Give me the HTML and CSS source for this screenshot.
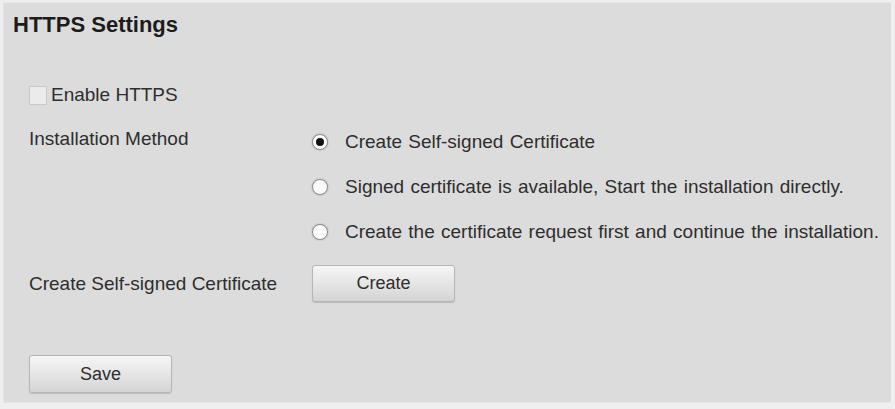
FILE: index.html
```html
<!DOCTYPE html>
<html lang="en">
<head>
  <meta charset="UTF-8" />
  <title>HTTPS Settings</title>
  <link rel="stylesheet" href="styles.css">
</head>
<body>
  <div class="panel">
    <h1 class="title">HTTPS Settings</h1>
    <label class="check-row">
      <span class="checkbox"></span>
      <span>Enable HTTPS</span>
    </label>
    <div class="form-row method-row">
      <div class="label">Installation Method</div>
      <div class="options">
        <div class="option"><span class="radio checked"></span>Create Self-signed Certificate</div>
        <div class="option"><span class="radio"></span>Signed certificate is available, Start the installation directly.</div>
        <div class="option"><span class="radio"></span>Create the certificate request first and continue the installation.</div>
      </div>
    </div>
    <div class="form-row create-row">
      <div class="label">Create Self-signed Certificate</div>
      <button class="btn">Create</button>
    </div>
    <div class="save-row">
      <button class="btn">Save</button>
    </div>
  </div>
</body>
</html>
```

FILE: styles.css
```css
body {
  margin: 0;
  background: #efefef;
  font-family: "Liberation Sans", Arial, sans-serif;
  color: #2e2e2e;
}
.panel {
  margin: 2px 4px 0 3px;
  height: 401px;
  padding: 9px 0 0 0;
  box-sizing: border-box;
  background: #dcdcdc;
  border-top: 1px solid #e6e6e6;
  border-left: 1px solid #e4e4e4;
  border-bottom: 1px solid #e6e6e6;
}
.title {
  margin: 0 0 0 9px;
  font-size: 22px;
  line-height: 26px;
  font-weight: bold;
  color: #1c1c1c;
}
.check-row {
  display: flex;
  align-items: center;
  height: 24px;
  margin: 45px 0 0 25px;
  font-size: 19px;
}
.checkbox {
  width: 16px;
  height: 17px;
  margin-right: 4px;
  border: 1px solid #c8c8c8;
  background: #ebebeb;
}
.form-row {
  display: flex;
  padding-left: 25px;
  font-size: 19px;
}
.label {
  width: 283px;
  flex: none;
}
.method-row {
  margin-top: 12px;
}
.method-row .label {
  padding-top: 8px;
  line-height: 24px;
}
.options {
  display: flex;
  flex-direction: column;
}
.option {
  display: flex;
  align-items: center;
  height: 45px;
  word-spacing: 1px;
}
.radio {
  width: 14px;
  height: 14px;
  margin-right: 17px;
  border: 1px solid #8e8e8e;
  border-radius: 50%;
  background: #fbfbfb;
  box-shadow: 0 0 2px rgba(0, 0, 0, 0.25);
  position: relative;
}
.radio.checked::after {
  content: "";
  position: absolute;
  left: 3px;
  top: 3px;
  width: 8px;
  height: 8px;
  border-radius: 50%;
  background: #111;
}
.create-row {
  margin-top: 11px;
  align-items: center;
}
.btn {
  width: 143px;
  height: 37px;
  padding: 0;
  border: 1px solid #b5b5b5;
  border-radius: 3px;
  background: linear-gradient(to bottom, #f6f6f6, #e2e2e2 60%, #d4d4d4);
  box-shadow: 0 1px 1px rgba(0, 0, 0, 0.15);
  font-family: "Liberation Sans", Arial, sans-serif;
  font-size: 18px;
  color: #2e2e2e;
}
.save-row {
  margin: 53px 0 0 25px;
}
.save-row .btn {
  height: 38px;
}
```
